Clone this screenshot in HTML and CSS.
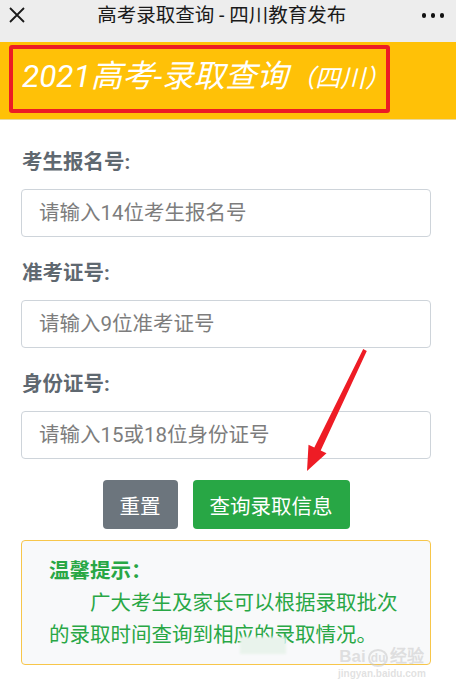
FILE: index.html
```html
<!DOCTYPE html>
<html lang="zh-CN">
<head>
<meta charset="utf-8">
<title>高考录取查询 - 四川教育发布</title>
<link rel="stylesheet" href="styles.css">
</head>
<body>
<div class="page">
  <header class="topbar">
    <svg class="close-icon" width="18" height="18" viewBox="0 0 18 18"><path d="M2 2 L16 16 M16 2 L2 16" stroke="#1a1a1a" stroke-width="1.8" fill="none"/></svg>
    <div class="topbar-title">高考录取查询 - 四川教育发布</div>
    <div class="more-icon"><span></span><span></span><span></span></div>
  </header>

  <section class="banner">
    <div class="banner-box">
      <h1 class="banner-title">2021高考-录取查询<span class="banner-sub">（四川）</span></h1>
    </div>
  </section>

  <form class="form">
    <div class="field">
      <label class="field-label">考生报名号:</label>
      <input class="field-input" type="text" placeholder="请输入14位考生报名号">
    </div>
    <div class="field">
      <label class="field-label">准考证号:</label>
      <input class="field-input" type="text" placeholder="请输入9位准考证号">
    </div>
    <div class="field">
      <label class="field-label">身份证号:</label>
      <input class="field-input" type="text" placeholder="请输入15或18位身份证号">
    </div>
    <div class="actions">
      <button type="button" class="btn btn-reset">重置</button>
      <button type="button" class="btn btn-query">查询录取信息</button>
    </div>
    <div class="notice">
      <div class="notice-title">温馨提示：</div>
      <p class="notice-text">广大考生及家长可以根据录取批次的录取时间查询到相应的录取情况。</p>
    </div>
  </form>

  <div class="smudge"></div>
  <div class="watermark">
    <div class="wm-main">Bai<span class="wm-du">du</span>经验</div>
    <div class="wm-sub">jingyan.baidu.com</div>
  </div>

  <svg class="arrow" width="456" height="690" viewBox="0 0 456 690">
    <polygon points="363.2,349.1 366.8,350.9 320.7,450.5 326.5,453.3 307,471 308.5,444.7 314.3,447.5" fill="#ee1c25"/>
  </svg>
</div>
</body>
</html>
```

FILE: styles.css
```css
* { box-sizing: border-box; }

html, body {
  margin: 0;
  padding: 0;
  background: #ffffff;
}

body {
  font-family: Roboto, "Noto Sans CJK SC", sans-serif;
  width: 456px;
  height: 690px;
  overflow: hidden;
}

.page {
  position: relative;
  width: 456px;
  height: 690px;
}

.topbar {
  height: 42px;
  background: #ededed;
  display: flex;
  align-items: flex-start;
  padding: 0 12px 0 8px;
}

.close-icon {
  margin-top: 6px;
  flex: none;
}

.topbar-title {
  flex: 1;
  text-align: center;
  font-size: 19.5px;
  line-height: 32px;
  color: #1a1a1a;
  padding-right: 4px;
}

.more-icon {
  display: flex;
  gap: 4.5px;
  margin-top: 13px;
  flex: none;
}

.more-icon span {
  width: 4.5px;
  height: 4.5px;
  border-radius: 50%;
  background: #111;
}

.banner {
  background: #ffc107;
  padding: 3px 0 6px 9px;
  border-bottom: 1px solid #e8d9a0;
}

.banner-box {
  width: 381px;
  height: 68px;
  border: 4px solid #ec1c24;
  border-radius: 3px;
  display: flex;
  align-items: center;
  padding-left: 9px;
}

.banner-title {
  margin: 0;
  font-size: 31.5px;
  font-weight: normal;
  font-style: italic;
  color: #ffffff;
  white-space: nowrap;
  line-height: 40px;
  margin-top: -3px;
}

.banner-sub {
  font-size: 25px;
  margin-left: 2px;
}

.form {
  padding: 28px 25px 0 21px;
}

.field {
  display: flex;
  flex-direction: column;
  margin-bottom: 22px;
}

.field-label {
  font-size: 20.5px;
  font-weight: bold;
  line-height: 28px;
  color: #5f6870;
  padding-left: 1px;
  margin-bottom: 13px;
}

.field-input {
  height: 48px;
  border: 1px solid #ced4da;
  border-radius: 4px;
  padding: 0 17px;
  font-family: Roboto, "Noto Sans CJK SC", sans-serif;
  font-size: 20.5px;
  color: #333;
  background: #fff;
  outline: none;
}

.field-input::placeholder {
  color: #7d7d7d;
}

.actions {
  display: flex;
  justify-content: center;
  gap: 15px;
  margin-top: -1px;
}

.btn {
  height: 49px;
  border: none;
  border-radius: 4px;
  padding: 0 17px;
  font-family: Roboto, "Noto Sans CJK SC", sans-serif;
  font-size: 20.5px;
  color: #ffffff;
}

.btn-reset { background: #6c757d; }
.btn-query { background: #28a745; }

.notice {
  margin-top: 11px;
  border: 1px solid #f7c64a;
  border-radius: 4px;
  background: #f8f9fa;
  padding: 14px 27px 14px 27px;
  color: #28a745;
  height: 125px;
}

.notice-title {
  font-size: 20.5px;
  font-weight: bold;
  line-height: 32px;
}

.notice-text {
  margin: 0;
  font-size: 20.5px;
  line-height: 32px;
  text-indent: 2em;
}

.smudge {
  position: absolute;
  left: 240px;
  top: 637px;
  width: 46px;
  height: 17px;
  background: #e9f3ec;
  filter: blur(1px);
}

.watermark {
  position: absolute;
  left: 338px;
  top: 648px;
  color: rgba(200, 200, 200, 0.55);
  font-family: "Liberation Sans", sans-serif;
  text-align: center;
}

.wm-main {
  font-size: 17px;
  font-weight: bold;
  line-height: 18px;
  white-space: nowrap;
}

.wm-du {
  font-size: 12px;
  border: 2px solid rgba(200, 200, 200, 0.55);
  border-radius: 50%;
  padding: 0 1px;
  margin: 0 2px;
}

.wm-sub {
  font-size: 10px;
  line-height: 13px;
  font-weight: bold;
}

.arrow {
  position: absolute;
  left: 0;
  top: 0;
  pointer-events: none;
}
```
